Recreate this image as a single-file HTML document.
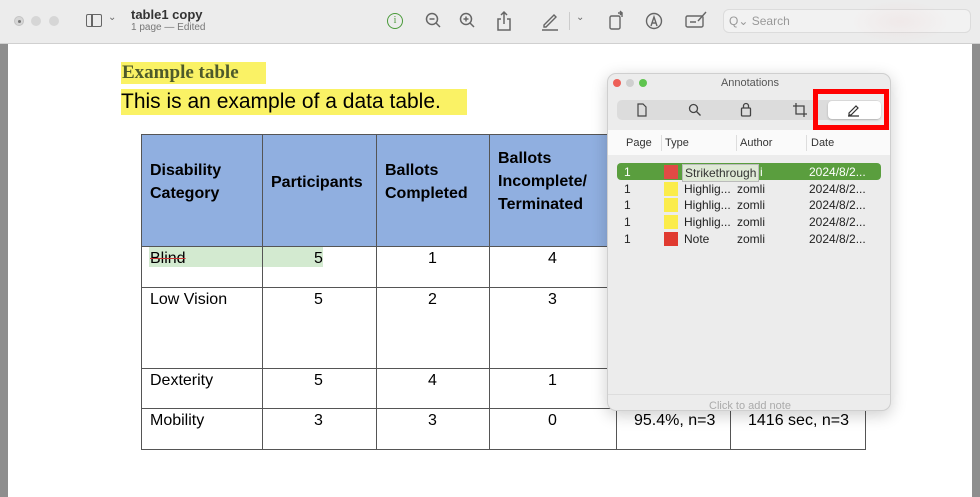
<!DOCTYPE html><html><head><meta charset="utf-8"><style>
*{margin:0;padding:0;box-sizing:border-box}
body{width:980px;height:497px;overflow:hidden;position:relative;background:#fff;font-family:"Liberation Sans",sans-serif}
.a{position:absolute}
.tb{left:0;top:0;width:980px;height:44px;background:#ececec;border-bottom:1px solid #d0d0d0}
.ic{position:absolute;color:#6a6a6a;font-size:14px}
.cell{position:absolute;font-family:"Liberation Sans",sans-serif;font-size:16px;color:#000}
.h{font-weight:bold;font-size:16px;line-height:23px}
.vl{position:absolute;width:1px;background:#555}
.hl{position:absolute;height:1px;background:#555}
.row{position:absolute;left:617px;width:264px;height:16px;font-size:12px;color:#222;line-height:16px}
.row span{position:absolute}
</style></head><body>
<div class="a" style="left:0;top:44px;width:8px;height:453px;background:#8e8e8e"></div>
<div class="a" style="left:972px;top:44px;width:8px;height:453px;background:#8e8e8e"></div>
<div class="a tb"></div>
<div class="a" style="left:14px;top:16px;width:10px;height:10px;border-radius:50%;background:#d6d6d6;border:1px solid #c4c4c4"></div>
<div class="a" style="left:18px;top:20px;width:3px;height:3px;border-radius:50%;background:#777"></div>
<div class="a" style="left:31px;top:16px;width:10px;height:10px;border-radius:50%;background:#d6d6d6"></div>
<div class="a" style="left:49px;top:16px;width:10px;height:10px;border-radius:50%;background:#d6d6d6"></div>
<div class="a" style="left:86px;top:14px;width:16px;height:13px;border:1.5px solid #666;border-radius:2px"></div>
<div class="a" style="left:91px;top:14px;width:1.5px;height:13px;background:#666"></div>
<div class="ic" style="left:108px;top:12px;font-size:10px">⌄</div>
<div class="a" style="left:131px;top:7px;font-size:13px;font-weight:bold;color:#333">table1 copy</div>
<div class="a" style="left:131px;top:22px;font-size:10px;color:#777">1 page — Edited</div>
<div class="a" style="left:387px;top:13px;width:16px;height:16px;border:1.5px solid #4a9a3a;border-radius:50%;color:#4a9a3a;font-size:10px;text-align:center;line-height:13px;font-family:'Liberation Serif',serif">i</div>
<svg class="a" style="left:425px;top:12px" width="18" height="18" fill="none" stroke="#666" stroke-width="1.5"><circle cx="7" cy="7" r="5.5"/><path d="M4.5 7h5M11 11l4 4"/></svg>
<svg class="a" style="left:459px;top:12px" width="18" height="18" fill="none" stroke="#666" stroke-width="1.5"><circle cx="7" cy="7" r="5.5"/><path d="M4.5 7h5M7 4.5v5M11 11l4 4"/></svg>
<svg class="a" style="left:496px;top:10px" width="16" height="22" fill="none" stroke="#666" stroke-width="1.5"><path d="M5 9H2v11h12V9h-3M8 14V2M5 5l3-3 3 3"/></svg>
<svg class="a" style="left:540px;top:11px" width="20" height="20" fill="none" stroke="#666" stroke-width="1.4"><path d="M4 14l10-10 2 2-10 10H4zM2 19h16"/></svg>
<div class="a" style="left:569px;top:12px;width:1px;height:18px;background:#ccc"></div>
<div class="ic" style="left:576px;top:12px;font-size:10px">⌄</div>
<svg class="a" style="left:607px;top:9px" width="20" height="22" fill="none" stroke="#666" stroke-width="1.4"><rect x="3" y="7" width="10" height="13" rx="1.5"/><path d="M11 4h4v4M13 2l2 2-2 2"/></svg>
<svg class="a" style="left:644px;top:11px" width="20" height="20" fill="none" stroke="#666" stroke-width="1.4"><circle cx="10" cy="10" r="7.5"/><path d="M7 15l3-9 3 9M8 12h4"/></svg>
<svg class="a" style="left:684px;top:10px" width="24" height="20" fill="none" stroke="#666" stroke-width="1.4"><rect x="2" y="6" width="17" height="11" rx="1.5"/><path d="M6 12h6M14 11l8-9"/></svg>
<div class="a" style="left:723px;top:9px;width:248px;height:24px;background:#f2f2f2;border:1px solid #dcdcdc;border-radius:6px"></div>
<div class="a" style="left:729px;top:14px;font-size:12px;color:#999">Q⌄ Search</div>
<div class="a" style="left:850px;top:0;width:100px;height:44px;background:radial-gradient(ellipse at center,rgba(230,190,190,.18),rgba(230,190,190,0) 70%)"></div>

<div class="a" style="left:121px;top:62px;width:145px;height:22px;background:#faf265"></div>
<div class="a" style="left:122px;top:62px;font-family:'Liberation Serif',serif;font-weight:bold;font-size:19px;color:#4e5b2b">Example table</div>
<div class="a" style="left:121px;top:89px;width:346px;height:26px;background:#faf265"></div>
<div class="a" style="left:121px;top:90px;font-size:21px;color:#000">This is an example of a data table.</div>

<div class="a" style="left:141px;top:134px;width:475px;height:112px;background:#90afe0"></div>
<div class="a" style="left:149px;top:247px;width:174px;height:20px;background:#d3ead0"></div>
<div class="hl" style="left:141px;top:134px;width:724px"></div>
<div class="hl" style="left:141px;top:246px;width:476px"></div>
<div class="hl" style="left:141px;top:287px;width:476px"></div>
<div class="hl" style="left:141px;top:368px;width:476px"></div>
<div class="hl" style="left:141px;top:408px;width:724px"></div>
<div class="hl" style="left:141px;top:449px;width:724px"></div>
<div class="vl" style="left:141px;top:134px;height:316px"></div>
<div class="vl" style="left:262px;top:134px;height:316px"></div>
<div class="vl" style="left:376px;top:134px;height:316px"></div>
<div class="vl" style="left:489px;top:134px;height:316px"></div>
<div class="vl" style="left:616px;top:408px;height:42px"></div>
<div class="vl" style="left:730px;top:408px;height:42px"></div>
<div class="vl" style="left:865px;top:134px;height:316px"></div>

<div class="cell h" style="left:150px;top:159px">Disability<br>Category</div>
<div class="cell h" style="left:271px;top:171px">Participants</div>
<div class="cell h" style="left:385px;top:159px">Ballots<br>Completed</div>
<div class="cell h" style="left:498px;top:147px">Ballots<br>Incomplete/<br>Terminated</div>
<div class="cell" style="left:150px;top:250px;text-decoration:line-through;text-decoration-color:#c33">Blind</div>
<div class="cell" style="left:150px;top:291px">Low Vision</div>
<div class="cell" style="left:150px;top:372px">Dexterity</div>
<div class="cell" style="left:150px;top:412px">Mobility</div>
<div class="cell" style="left:314px;top:250px">5</div><div class="cell" style="left:428px;top:250px">1</div><div class="cell" style="left:548px;top:250px">4</div>
<div class="cell" style="left:314px;top:291px">5</div><div class="cell" style="left:428px;top:291px">2</div><div class="cell" style="left:548px;top:291px">3</div>
<div class="cell" style="left:314px;top:372px">5</div><div class="cell" style="left:428px;top:372px">4</div><div class="cell" style="left:548px;top:372px">1</div>
<div class="cell" style="left:314px;top:412px">3</div><div class="cell" style="left:428px;top:412px">3</div><div class="cell" style="left:548px;top:412px">0</div>
<div class="cell" style="left:634px;top:412px">95.4%, n=3</div>
<div class="cell" style="left:748px;top:412px">1416 sec, n=3</div>

<div class="a" style="left:607px;top:73px;width:284px;height:338px;background:#ececec;border:1px solid #cfcfcf;border-radius:9px;box-shadow:0 4px 16px rgba(0,0,0,.2);overflow:hidden">
 <div class="a" style="left:5px;top:5px;width:8px;height:8px;border-radius:50%;background:#ed5f57"></div>
 <div class="a" style="left:18px;top:5px;width:8px;height:8px;border-radius:50%;background:#cfcfcf"></div>
 <div class="a" style="left:31px;top:5px;width:8px;height:8px;border-radius:50%;background:#5fc44f"></div>
 <div class="a" style="left:0;top:3px;width:284px;text-align:center;font-size:11px;color:#555">Annotations</div>
 <div class="a" style="left:9px;top:26px;width:264px;height:20px;background:#dcdcdc;border-radius:5px"></div>
 <svg class="a" style="left:28px;top:29px" width="12" height="14" fill="none" stroke="#444" stroke-width="1.2"><path d="M2 1h5l3 3v9H2z"/></svg>
 <svg class="a" style="left:80px;top:29px" width="14" height="14" fill="none" stroke="#444" stroke-width="1.3"><circle cx="5.5" cy="5.5" r="4"/><path d="M8.5 8.5l4 4"/></svg>
 <svg class="a" style="left:132px;top:28px" width="12" height="15" fill="none" stroke="#444" stroke-width="1.3"><rect x="1.5" y="6" width="9" height="8" rx="1"/><path d="M3.5 6V4a2.5 2.5 0 015 0v2"/></svg>
 <svg class="a" style="left:185px;top:29px" width="14" height="14" fill="none" stroke="#444" stroke-width="1.3"><path d="M3 0v11h11M0 3h11v11"/></svg>
 <div class="a" style="left:220px;top:27px;width:53px;height:18px;background:#fff;border-radius:4px;box-shadow:0 1px 2px rgba(0,0,0,.2)"></div>
 <svg class="a" style="left:239px;top:29px" width="14" height="14" fill="none" stroke="#333" stroke-width="1.2"><path d="M2 10l7-7 2 2-7 7H2zM1 13h11"/></svg>
 <div class="a" style="left:205px;top:15px;width:76px;height:41px;border:5px solid #f00"></div>
 <div class="a" style="left:0;top:56px;width:284px;height:25px;background:#fafafa"></div>
 <div class="a" style="left:18px;top:63px;font-size:11px;color:#333">Page</div>
 <div class="a" style="left:53px;top:61px;width:1px;height:16px;background:#ddd"></div>
 <div class="a" style="left:57px;top:63px;font-size:11px;color:#333">Type</div>
 <div class="a" style="left:128px;top:61px;width:1px;height:16px;background:#ddd"></div>
 <div class="a" style="left:132px;top:63px;font-size:11px;color:#333">Author</div>
 <div class="a" style="left:198px;top:61px;width:1px;height:16px;background:#ddd"></div>
 <div class="a" style="left:203px;top:63px;font-size:11px;color:#333">Date</div>
 <div class="a" style="left:0;top:320px;width:284px;height:1px;background:#ddd"></div>
 <div class="a" style="left:0;top:326px;width:284px;text-align:center;font-size:11px;color:#aaa">Click to add note</div>
</div>
<div class="a" style="left:617px;top:163px;width:264px;height:17px;background:#5a9e3e;border-radius:4px"></div>
<div class="row" style="top:164px;color:#fff"><span style="left:7px">1</span><span style="left:47px;top:1px;width:14px;height:14px;background:#e04a45"></span><span style="left:65px;top:0;padding:0 2px;background:#dfe9d6;color:#333;border:1px solid #bbb">Strikethrough</span><span style="left:143px">i</span><span style="left:192px">2024/8/2...</span></div>
<div class="row" style="top:181px"><span style="left:7px">1</span><span style="left:47px;top:1px;width:14px;height:14px;background:#fbec4a"></span><span style="left:67px">Highlig...</span><span style="left:120px">zomli</span><span style="left:192px">2024/8/2...</span></div>
<div class="row" style="top:197px"><span style="left:7px">1</span><span style="left:47px;top:1px;width:14px;height:14px;background:#fbec4a"></span><span style="left:67px">Highlig...</span><span style="left:120px">zomli</span><span style="left:192px">2024/8/2...</span></div>
<div class="row" style="top:214px"><span style="left:7px">1</span><span style="left:47px;top:1px;width:14px;height:14px;background:#fbec4a"></span><span style="left:67px">Highlig...</span><span style="left:120px">zomli</span><span style="left:192px">2024/8/2...</span></div>
<div class="row" style="top:231px"><span style="left:7px">1</span><span style="left:47px;top:1px;width:14px;height:14px;background:#e03a30"></span><span style="left:67px">Note</span><span style="left:120px">zomli</span><span style="left:192px">2024/8/2...</span></div>
</body></html>
